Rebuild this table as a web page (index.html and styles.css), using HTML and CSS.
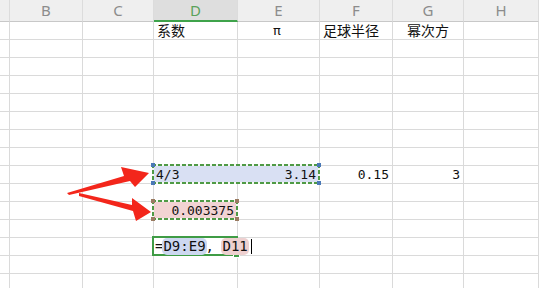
FILE: index.html
```html
<!DOCTYPE html>
<html>
<head>
<meta charset="utf-8">
<link rel="stylesheet" href="styles.css">
</head>
<body>
<div class="page">
  <div class="sheet">
    <!-- column headers -->
    <div class="h"></div><div class="h">B</div><div class="h">C</div><div class="h h-active">D</div><div class="h">E</div><div class="h">F</div><div class="h">G</div><div class="h">H</div>
    <!-- row 1 -->
    <div class="c"></div><div class="c"></div><div class="c"></div><div class="c cjk">系数</div><div class="c cjk pi">π</div><div class="c cjk">足球半径</div><div class="c cjk center">幂次方</div><div class="c"></div>
    <!-- rows 2-8 -->
    <div class="c"></div><div class="c"></div><div class="c"></div><div class="c"></div><div class="c"></div><div class="c"></div><div class="c"></div><div class="c"></div>
    <div class="c"></div><div class="c"></div><div class="c"></div><div class="c"></div><div class="c"></div><div class="c"></div><div class="c"></div><div class="c"></div>
    <div class="c"></div><div class="c"></div><div class="c"></div><div class="c"></div><div class="c"></div><div class="c"></div><div class="c"></div><div class="c"></div>
    <div class="c"></div><div class="c"></div><div class="c"></div><div class="c"></div><div class="c"></div><div class="c"></div><div class="c"></div><div class="c"></div>
    <div class="c"></div><div class="c"></div><div class="c"></div><div class="c"></div><div class="c"></div><div class="c"></div><div class="c"></div><div class="c"></div>
    <div class="c"></div><div class="c"></div><div class="c"></div><div class="c"></div><div class="c"></div><div class="c"></div><div class="c"></div><div class="c"></div>
    <div class="c"></div><div class="c"></div><div class="c"></div><div class="c"></div><div class="c"></div><div class="c"></div><div class="c"></div><div class="c"></div>
    <!-- row 9 -->
    <div class="c"></div><div class="c"></div><div class="c"></div>
    <div class="c num range range-blue span2"><span>4/3</span><span>3.14</span>
      <div class="ants"><i class="k tl"></i><i class="k tr"></i><i class="k bl"></i><i class="k br"></i></div>
    </div>
    <div class="c num right">0.15</div><div class="c num right">3</div><div class="c"></div>
    <!-- row 10 -->
    <div class="c"></div><div class="c"></div><div class="c"></div><div class="c"></div><div class="c"></div><div class="c"></div><div class="c"></div><div class="c"></div>
    <!-- row 11 -->
    <div class="c"></div><div class="c"></div><div class="c"></div>
    <div class="c num right range range-pink">0.003375
      <div class="ants"><i class="k tl"></i><i class="k tr"></i><i class="k bl"></i><i class="k br"></i></div>
    </div>
    <div class="c"></div><div class="c"></div><div class="c"></div><div class="c"></div>
    <!-- row 12 -->
    <div class="c"></div><div class="c"></div><div class="c"></div><div class="c"></div><div class="c"></div><div class="c"></div><div class="c"></div><div class="c"></div>
    <!-- row 13 -->
    <div class="c"></div><div class="c"></div><div class="c"></div>
    <div class="c edit"><span class="formula">=<span class="ref ref-blue">D9:E9</span>, <span class="ref ref-pink">D11</span><span class="caret"></span></span>
      <div class="edit-box"><i class="fill-handle"></i></div>
    </div>
    <div class="c"></div><div class="c"></div><div class="c"></div><div class="c"></div>
    <!-- rows 14-15 -->
    <div class="c"></div><div class="c"></div><div class="c"></div><div class="c"></div><div class="c"></div><div class="c"></div><div class="c"></div><div class="c"></div>
    <div class="c"></div><div class="c"></div><div class="c"></div><div class="c"></div><div class="c"></div><div class="c"></div><div class="c"></div><div class="c"></div>
  </div>

  <svg class="arrows" width="539" height="288" viewBox="0 0 539 288">
    <polygon points="67,193 124,176 121,167 149,173 135,187 130,181 69,195" fill="#f3261b"/>
    <polygon points="79,193 132,205 132,198 151,212 136,221 133,211 79,196" fill="#f3261b"/>
  </svg>
</div>
</body>
</html>
```
FILE: styles.css
```css
html, body {
  margin: 0;
  padding: 0;
  background: #fff;
}

.page {
  position: relative;
  width: 539px;
  height: 288px;
  overflow: hidden;
}

.sheet {
  display: grid;
  grid-template-columns: 10px 73px 71px 84px 82px 73px 71px 75px;
  grid-template-rows: 22px;
  grid-auto-rows: 18px;
  font-family: "DejaVu Sans Mono", monospace;
  font-size: 13px;
  color: #111;
}

.h {
  box-sizing: border-box;
  background: #efefef;
  border-right: 1px solid #dcdcdc;
  border-bottom: 1px solid #c8c8c8;
  font-family: "Noto Sans", "Liberation Sans", sans-serif;
  font-size: 15px;
  color: #8c8c8c;
  text-align: center;
  line-height: 21px;
}

.h-active {
  background: #dedede;
  color: #5aa25a;
  border-bottom: 2px solid #3fa34b;
  line-height: 20px;
}

.c {
  box-sizing: border-box;
  border-right: 1px solid #dadada;
  border-bottom: 1px solid #dadada;
  line-height: 17px;
  padding: 0 3px 0 2px;
  white-space: nowrap;
}

.cjk {
  font-family: "Noto Sans CJK SC", sans-serif;
  font-size: 14px;
  line-height: 17px;
  padding-left: 3px;
}

.pi {
  padding-left: 35px;
  font-family: "DejaVu Sans", sans-serif;
  font-size: 13px;
}

.center {
  text-align: center;
}

.right {
  text-align: right;
}

.num {
  font-family: "DejaVu Sans Mono", monospace;
  font-size: 13px;
}

.span2 {
  grid-column: span 2;
  display: flex;
  justify-content: space-between;
}

.range {
  position: relative;
}

.range-blue {
  background: #d9e0f3;
}

.range-pink {
  background: #f2d3d3;
}

.ants {
  position: absolute;
  top: -2px;
  left: -2px;
  right: -1px;
  bottom: -1px;
  background:
    repeating-linear-gradient(90deg, #4f9a45 0 4px, #f4f8f2 4px 6px) top / 100% 2px no-repeat,
    repeating-linear-gradient(90deg, #4f9a45 0 4px, #f4f8f2 4px 6px) bottom / 100% 2px no-repeat,
    repeating-linear-gradient(180deg, #4f9a45 0 4px, #f4f8f2 4px 6px) left / 2px 100% no-repeat,
    repeating-linear-gradient(180deg, #4f9a45 0 4px, #f4f8f2 4px 6px) right / 2px 100% no-repeat;
}

.k {
  position: absolute;
  width: 4px;
  height: 4px;
  background: #4a78b6;
}

.range-pink .k {
  background: #9a7b62;
}

.tl { top: -1px; left: -1px; }
.tr { top: -1px; right: -1px; }
.bl { bottom: -1px; left: -1px; }
.br { bottom: -1px; right: -1px; }

.edit {
  position: relative;
  overflow: visible;
  padding-left: 1px;
}

.formula {
  position: relative;
  z-index: 2;
  font-family: "DejaVu Sans Mono", monospace;
  font-size: 14px;
  line-height: 17px;
  display: inline-flex;
  align-items: center;
  white-space: pre;
}

.ref {
  border-radius: 5px;
  padding: 0 1px;
  margin: 0 -1px;
}

.ref-blue {
  background: #cdd7f0;
}

.ref-pink {
  background: #eed0d0;
}

.caret {
  display: inline-block;
  width: 1px;
  height: 15px;
  background: #000;
  margin-left: 3px;
}

.edit-box {
  position: absolute;
  top: -2px;
  left: -2px;
  right: -1px;
  bottom: -1px;
  border: 2px solid #3f9c45;
}

.fill-handle {
  position: absolute;
  right: -4px;
  bottom: -4px;
  width: 5px;
  height: 5px;
  background: #3f9c45;
  border: 1px solid #fff;
}

.arrows {
  position: absolute;
  top: 0;
  left: 0;
  pointer-events: none;
}
```
